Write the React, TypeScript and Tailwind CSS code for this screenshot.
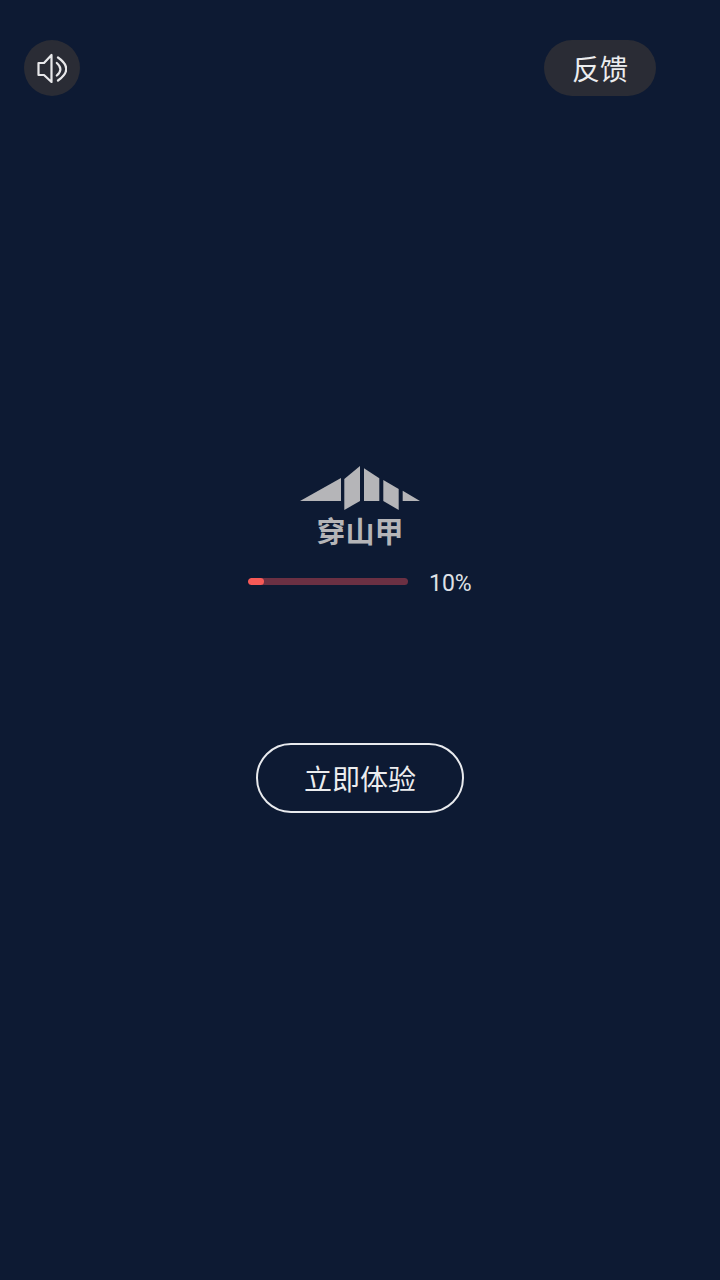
import React from "react";

const CJK = "font-['Noto_Sans_CJK_SC','Noto_Sans',sans-serif]";

function SpeakerIcon() {
  return (
    <svg width="30" height="30" viewBox="0 0 30 30" fill="none" stroke="#e8e8ea" strokeWidth="2.2" strokeLinejoin="round" strokeLinecap="round">
      <path d="M1.5 10 H7 L14.5 2 V29 L7 22 H1.5 Z" />
      <path d="M19.8 10 Q27 16 19.8 22.5" />
      <path d="M21 4.5 Q37.5 16 21 27.5" />
    </svg>
  );
}

function Logo() {
  return (
    <div className="flex flex-col items-center">
      <svg width="120" height="45" viewBox="300 466 120 45" fill="#b5b5b8">
        <polygon points="300,501 341,478 341,501" />
        <polygon points="344.3,479 360,466 360,501 344.3,510" />
        <polygon points="364,468.3 379.3,478.3 379.3,501 364,501" />
        <polygon points="383.3,480 398.7,489 398.7,510 383.3,501" />
        <polygon points="402.7,490.7 420,501 402.7,501" />
      </svg>
      <span className={`${CJK} mt-[1px] text-[29px] leading-[36px] font-bold text-[#b5b5b8]`}>穿山甲</span>
    </div>
  );
}

export default function App() {
  return (
    <div className="flex h-[1280px] w-[720px] flex-col items-center bg-[#0d1a33]">
      <header className="flex w-full items-center justify-between pt-10 pr-16 pl-6">
        <button className="flex h-14 w-14 items-center justify-center rounded-full bg-[#2a2c35]">
          <SpeakerIcon />
        </button>
        <button className={`${CJK} flex h-14 w-28 items-center justify-center rounded-full bg-[#2a2c35] text-[28px] text-[#ecedef]`}>
          反馈
        </button>
      </header>

      <div className="mt-[370px]">
        <Logo />
      </div>

      <div className="mt-[18px] flex w-[224px] items-center self-center">
        <div className="h-[7px] w-40 overflow-hidden rounded-full bg-[#6b3043]">
          <div className="h-full w-[10%] rounded-full bg-[#f65a57]" />
        </div>
        <span className="mt-[5px] ml-[21px] font-['Roboto',sans-serif] text-[23px] leading-[26px] whitespace-nowrap text-[#dfe1e6]">10%</span>
      </div>

      <button className={`${CJK} mt-[146px] flex h-[70px] w-52 items-center justify-center rounded-full border-2 border-[#e8eaee] text-[28px] text-[#ecedef]`}>
        立即体验
      </button>
    </div>
  );
}
